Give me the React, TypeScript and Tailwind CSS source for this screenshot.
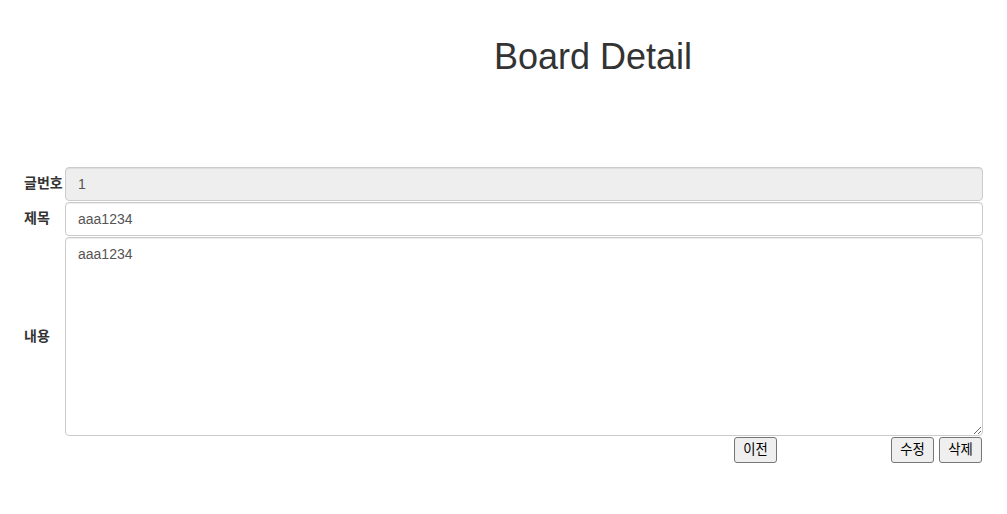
const labelCls =
  "flex items-center text-[14px] font-bold text-[#333] whitespace-nowrap";
const inputCls =
  "w-full h-[34px] px-3 text-[14px] text-[#555] border border-[#ccc] rounded-[4px] shadow-[inset_0_1px_1px_rgba(0,0,0,0.075)] outline-none";
const btnCls =
  "w-[43px] h-[26px] flex items-center justify-center text-[13.33px] text-black bg-[#efefef] border border-[#767676] rounded-[3px] leading-none";

const App = () => {
  return (
    <div
      className="w-full min-h-[514px] bg-white px-6"
      style={{ fontFamily: '"Liberation Sans", Arial, "Noto Sans CJK KR", sans-serif' }}
    >
      <h1 className="pt-[37px] pl-[470px] text-[36px] leading-[1.1] font-normal text-[#333]">
        Board Detail
      </h1>

      <div className="mt-[90px] grid grid-cols-[41px_1fr] gap-y-[1px]">
        <span className={labelCls}>글번호</span>
        <input className={`${inputCls} bg-[#eee]`} value="1" disabled readOnly />

        <span className={labelCls}>제목</span>
        <input className={`${inputCls} bg-white`} value="aaa1234" readOnly />

        <span className={labelCls}>내용</span>
        <textarea
          className="w-full h-[199px] px-3 py-[6px] text-[14px] text-[#555] border border-[#ccc] rounded-[4px] shadow-[inset_0_1px_1px_rgba(0,0,0,0.075)] outline-none resize"
          value="aaa1234"
          readOnly
        />

        <span />
        <div className="flex items-start pr-px">
          <button className={`${btnCls} ml-[669px]`}>이전</button>
          <div className="ml-auto flex gap-[5px]">
            <button className={btnCls}>수정</button>
            <button className={btnCls}>삭제</button>
          </div>
        </div>
      </div>
    </div>
  );
};

export default App;
